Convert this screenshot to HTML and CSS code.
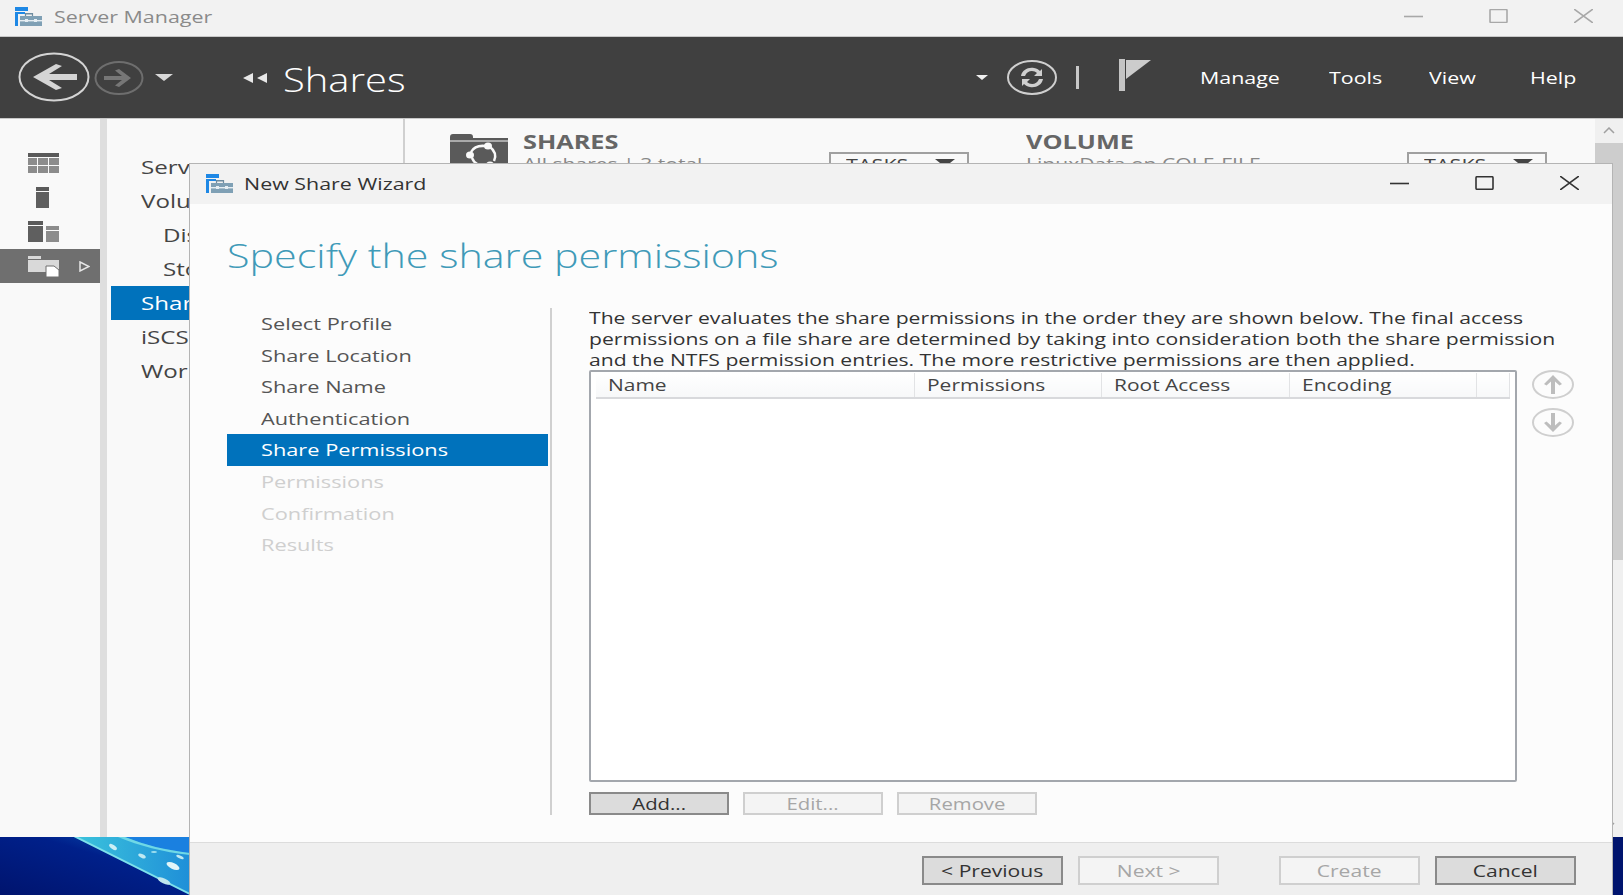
FILE: index.html
```html
<!DOCTYPE html>
<html lang="en">

<head>
    <meta charset="UTF-8">
    <title>Server Manager - New Share Wizard</title>
    <link rel="stylesheet" href="styles.css">
</head>

<body>
    <svg class="defs" aria-hidden="true">
        <symbol id="app-icon" viewBox="0 0 27 19">
            <rect x="0" y="0" width="13" height="4" fill="#1e88e5" />
            <rect x="0" y="5" width="3" height="14" fill="#1e88e5" />
            <rect x="3" y="5" width="7" height="2" fill="#1e88e5" />
            <path d="M11 7h6M10.5 9V6.500h7V9" fill="none" stroke="#6e8ca0" stroke-width="1.200" />
            <rect x="5" y="9" width="22" height="10" fill="#7fa0b5" />
            <rect x="5" y="13" width="22" height="1.400" fill="#e6eef3" />
            <rect x="10" y="12" width="3" height="3" fill="#e6eef3" />
            <rect x="19" y="12" width="3" height="3" fill="#e6eef3" />
        </symbol>
        <linearGradient id="wall-sea" x1="0" y1="1" x2="1" y2="0">
            <stop offset="0" stop-color="#00146e" />
            <stop offset="0.600" stop-color="#00208a" />
            <stop offset="1" stop-color="#0b5fc0" />
        </linearGradient>
        <linearGradient id="wall-band" x1="0" y1="0" x2="1" y2="0">
            <stop offset="0" stop-color="#3cc4dc" />
            <stop offset="1" stop-color="#1f8fd8" />
        </linearGradient>
    </svg>

    <!-- server manager window, behind the wizard -->
    <div class="window">
        <header class="titlebar">
            <svg class="app-icon"><use href="#app-icon" /></svg>
            <span class="titlebar-text"><span class="st">Server Manager</span></span>
            <div class="win-controls win-controls-dim">
                <svg width="19" height="14" viewBox="0 0 19 14"><path d="M0 7.500h19" /></svg>
                <svg width="19" height="14" viewBox="0 0 19 14"><rect x="1" y="0.500" width="17" height="13" rx="1" /></svg>
                <svg width="19" height="14" viewBox="0 0 19 14"><path d="M0 0l19 14M19 0L0 14" /></svg>
            </div>
        </header>

        <div class="topbar">
            <svg class="nav-back" width="72" height="50" viewBox="0 0 72 50">
                <ellipse cx="36" cy="25" rx="34.500" ry="23.500" fill="none" stroke="#d4d4d4" stroke-width="2" />
                <path d="M15 25L38 12l6 2-13 8h28v6H31l13 8-6 2z" fill="#d4d4d4" />
            </svg>
            <svg class="nav-forward" width="50" height="34" viewBox="0 0 50 34">
                <ellipse cx="25" cy="17" rx="23.500" ry="16" fill="none" stroke="#6e6e6e" stroke-width="2" />
                <path d="M37 17L25 8l-4 1.500 7 5.500H10v4h18l-7 5.500 4 1.500z" fill="#777" />
            </svg>
            <span class="caret caret-big"></span>
            <svg class="crumb-arrows" width="25" height="10" viewBox="0 0 25 10">
                <path d="M0 5l10-5v10zM14 5l10-5v10z" fill="#e8e8e8" />
            </svg>
            <span class="crumb-title"><span class="st">Shares</span></span>

            <span class="caret caret-small"></span>
            <svg class="refresh" width="50" height="35" viewBox="0 0 50 35">
                <ellipse cx="25" cy="17.500" rx="24" ry="16.500" fill="none" stroke="#cfcfcf" stroke-width="2" />
                <path d="M14 16c1-6 7-9 13-8 3 .5 5 2 6 3l2-2v7h-8l3-3c-3-3-10-3-12 3z" fill="#cfcfcf" />
                <path d="M36 19c-1 6-7 9-13 8-3-.5-5-2-6-3l-2 2v-7h8l-3 3c3 3 10 3 12-3z" fill="#cfcfcf" />
            </svg>
            <span class="topbar-sep"></span>
            <svg class="flag" width="32" height="32" viewBox="0 0 32 32">
                <path d="M0 0h6v32H0z" fill="#c4c4c4" />
                <path d="M7 1h25L7 20z" fill="#cccccc" />
            </svg>
            <nav class="menu">
                <span class="menu-manage"><span class="st">Manage</span></span>
                <span class="menu-tools"><span class="st">Tools</span></span>
                <span class="menu-view"><span class="st">View</span></span>
                <span class="menu-help"><span class="st">Help</span></span>
            </nav>
        </div>

        <div class="main">
            <aside class="rail">
                <div class="rail-item">
                    <svg width="31" height="20" viewBox="0 0 31 20">
                        <rect width="31" height="4" fill="#5a5a5a" />
                        <path d="M0 5h9v7H0zM10 5h10v7H10zM21 5h10v7H21zM0 13h9v7H0zM10 13h10v7H10zM21 13h10v7H21z" fill="#8c8c8c" />
                    </svg>
                </div>
                <div class="rail-item">
                    <svg width="13" height="21" viewBox="0 0 13 21">
                        <rect width="13" height="4" fill="#5a5a5a" />
                        <rect y="5" width="13" height="16" fill="#5f5f5f" />
                    </svg>
                </div>
                <div class="rail-item">
                    <svg width="31" height="21" viewBox="0 0 31 21">
                        <rect width="15" height="4" fill="#5a5a5a" />
                        <rect y="5" width="15" height="16" fill="#5f5f5f" />
                        <rect x="18" y="5" width="13" height="4" fill="#8c8c8c" />
                        <rect x="18" y="10" width="13" height="11" fill="#8c8c8c" />
                    </svg>
                </div>
                <div class="rail-item rail-item-active">
                    <svg width="31" height="21" viewBox="0 0 31 21">
                        <path d="M0 0h13v3H0zM0 4h31v12H0z" fill="#d9d9d9" />
                        <path d="M18 10h8l5 4v7H18z" fill="#fff" stroke="#6f6f6f" stroke-width="1" />
                    </svg>
                    <svg class="rail-arrow" width="11" height="11" viewBox="0 0 11 11">
                        <path d="M1 1l9 4.500-9 4.500z" fill="none" stroke="#e6e6e6" stroke-width="1.500" />
                    </svg>
                </div>
            </aside>
            <div class="rail-divider"></div>
            <nav class="tree">
                <div class="tree-item"><span class="st">Servers</span></div>
                <div class="tree-item"><span class="st">Volumes</span></div>
                <div class="tree-item tree-sub"><span class="st">Disks</span></div>
                <div class="tree-item tree-sub"><span class="st">Storage Pools</span></div>
                <div class="tree-item tree-active"><span class="st">Shares</span></div>
                <div class="tree-item"><span class="st">iSCSI</span></div>
                <div class="tree-item"><span class="st">Work Folders</span></div>
            </nav>
            <section class="content">
                <div class="panel panel-shares">
                    <svg class="panel-icon" width="58" height="40" viewBox="0 0 58 40">
                        <path d="M0 3q0-3 3-3h17q3 0 3 3v1h35v36H0z" fill="#5a5a5a" />
                        <path d="M0 7h58" stroke="#f9f9f9" stroke-width="1" />
                        <path d="M35 12q-10-1-14 6M22 24q3 8 14 8M44 27q4-8-5-15" fill="none" stroke="#f9f9f9" stroke-width="2.500" />
                        <ellipse cx="38" cy="12" rx="4" ry="3.500" fill="#f9f9f9" />
                        <ellipse cx="20" cy="21" rx="4" ry="3.500" fill="#f9f9f9" />
                        <ellipse cx="40" cy="31" rx="4" ry="3.500" fill="#f9f9f9" />
                    </svg>
                    <div class="panel-text">
                        <div class="panel-title"><span class="st">SHARES</span></div>
                        <div class="panel-sub"><span class="st">All shares | 3 total</span></div>
                    </div>
                    <div class="tasks"><span class="st">TASKS</span><span class="caret caret-dark"></span></div>
                </div>
                <div class="panel panel-volume">
                    <div class="panel-text">
                        <div class="panel-title"><span class="st">VOLUME</span></div>
                        <div class="panel-sub"><span class="st">LinuxData on COLE-FILE</span></div>
                    </div>
                    <div class="tasks"><span class="st">TASKS</span><span class="caret caret-dark"></span></div>
                </div>
            </section>
            <div class="scrollbar">
                <svg class="scroll-arrow" width="12" height="7" viewBox="0 0 12 7"><path d="M1 6l5-5 5 5" /></svg>
                <div class="scroll-thumb"></div>
                <svg class="scroll-arrow scroll-down" width="12" height="7" viewBox="0 0 12 7"><path d="M1 1l5 5 5-5" /></svg>
            </div>
        </div>
    </div>

    <!-- wallpaper corner under the window -->
    <svg class="wallpaper" width="190" height="58" viewBox="0 0 190 58">
        <rect width="190" height="58" fill="url(#wall-sea)" />
        <path d="M74 0H190V58z" fill="url(#wall-band)" />
        <path d="M125 0C145 8 165 13 190 16V0z" fill="#1a80e0" />
        <path d="M125 0C145 8 165 13 190 16v2C162 15 140 9 118 0z" fill="#6fd8e6" />
        <path d="M74 0h4L190 56v2z" fill="#7fe0ea" />
        <ellipse cx="113" cy="10" rx="4.500" ry="2" fill="#cdeff5" transform="rotate(35 113 10)" />
        <ellipse cx="142" cy="19" rx="4" ry="1.800" fill="#bfe9f2" transform="rotate(25 142 19)" />
        <ellipse cx="154" cy="15" rx="3" ry="1" fill="#9fdff0" />
        <ellipse cx="173" cy="29" rx="7" ry="3" fill="#e2f5f8" transform="rotate(25 173 29)" />
        <ellipse cx="180" cy="20" rx="4" ry="1.500" fill="#bfe9f2" transform="rotate(25 180 20)" />
        <ellipse cx="164" cy="44" rx="7" ry="2.500" fill="#bfe6ee" transform="rotate(25 164 44)" />
    </svg>

    <!-- wizard -->
    <div class="dialog">
        <header class="dlg-head">
            <svg class="dlg-icon"><use href="#app-icon" /></svg>
            <span class="dlg-title"><span class="st">New Share Wizard</span></span>
            <div class="win-controls">
                <svg width="19" height="14" viewBox="0 0 19 14"><path d="M0 7.500h19" /></svg>
                <svg width="19" height="14" viewBox="0 0 19 14"><rect x="1" y="0.750" width="17" height="12.500" rx="1" /></svg>
                <svg width="19" height="14" viewBox="0 0 19 14"><path d="M0 0l19 14M19 0L0 14" /></svg>
            </div>
        </header>

        <div class="dlg-body">
            <h1 class="page-title"><span class="st">Specify the share permissions</span></h1>
            <div class="wizard">
                <ul class="steps">
                    <li><span class="st">Select Profile</span></li>
                    <li><span class="st">Share Location</span></li>
                    <li><span class="st">Share Name</span></li>
                    <li><span class="st">Authentication</span></li>
                    <li class="step-active"><span class="st">Share Permissions</span></li>
                    <li class="step-off"><span class="st">Permissions</span></li>
                    <li class="step-off"><span class="st">Confirmation</span></li>
                    <li class="step-off"><span class="st">Results</span></li>
                </ul>
                <div class="wizard-main">
                    <p class="intro"><span class="st">The server evaluates the share permissions in the order they are shown below. The final access<br>permissions on a file share are determined by taking into consideration both the share permission<br>and the NTFS permission entries. The more restrictive permissions are then applied.</span></p>
                    <div class="list-row">
                        <div class="list-box">
                            <table class="perm-table">
                                <thead>
                                    <tr>
                                        <th class="col-name"><span class="st">Name</span></th>
                                        <th class="col-perm"><span class="st">Permissions</span></th>
                                        <th class="col-root"><span class="st">Root Access</span></th>
                                        <th class="col-enc"><span class="st">Encoding</span></th>
                                        <th class="col-end"></th>
                                    </tr>
                                </thead>
                            </table>
                        </div>
                        <div class="order-btns">
                            <svg width="42" height="29" viewBox="0 0 42 29">
                                <ellipse cx="21" cy="14.500" rx="20" ry="13.500" fill="none" stroke="#cfcfcf" stroke-width="2" />
                                <path d="M21 5l-9 9 2.500 1.500 4.500-4V24h4V11.500l4.500 4L30 14z" fill="#bdbdbd" />
                            </svg>
                            <svg width="42" height="29" viewBox="0 0 42 29">
                                <ellipse cx="21" cy="14.500" rx="20" ry="13.500" fill="none" stroke="#cfcfcf" stroke-width="2" />
                                <path d="M21 24l-9-9 2.500-1.500 4.500 4V5h4v12.500l4.500-4L30 15z" fill="#bdbdbd" />
                            </svg>
                        </div>
                    </div>
                    <div class="list-actions">
                        <button class="btn btn-on"><span class="st">Add...</span></button>
                        <button class="btn btn-off"><span class="st">Edit...</span></button>
                        <button class="btn btn-off"><span class="st">Remove</span></button>
                    </div>
                </div>
            </div>
        </div>

        <footer class="dlg-foot">
            <button class="btn btn-on btn-foot"><span class="st">&lt; Previous</span></button>
            <button class="btn btn-off btn-foot"><span class="st">Next &gt;</span></button>
            <button class="btn btn-off btn-foot btn-create"><span class="st">Create</span></button>
            <button class="btn btn-on btn-foot"><span class="st">Cancel</span></button>
        </footer>
    </div>
</body>

</html>
```

FILE: styles.css
```css
* {
    box-sizing: border-box;
}

html,
body {
    margin: 0;
    height: 895px;
    overflow: hidden;
}

body {
    position: relative;
    background: #00146e;
    font-family: "Open Sans", "Noto Sans", sans-serif;
    color: #444;
}

.defs {
    width: 0;
    height: 0;
    position: absolute;
}

/* the capture is wider than it is tall, so its letters are stretched */
.st {
    display: inline-block;
    white-space: nowrap;
    transform-origin: left center;
    transform: scaleX(var(--sx, 1.28));
}

.window {
    height: 837px;
    display: flex;
    flex-direction: column;
    background: #f9f9f9;
}

/* title bar */
.titlebar {
    height: 37px;
    flex: none;
    display: flex;
    align-items: center;
    background: #f2f2f2;
    border-bottom: 1px solid #c8c8c8;
    padding: 0 0 4px 15px;
}

.app-icon {
    width: 27px;
    height: 19px;
}

.titlebar-text {
    margin-left: 12px;
    font-size: 17px;
    color: #8a8a8a;
    --sx: 1.26;
}

.win-controls {
    margin-left: auto;
    display: flex;
    gap: 66px;
    padding-right: 30px;
}

.win-controls svg * {
    fill: none;
    stroke: #333;
    stroke-width: 1.600;
}

.win-controls-dim svg * {
    stroke: #a8a8a8;
}

/* dark bar */
.topbar {
    height: 82px;
    flex: none;
    display: flex;
    align-items: center;
    background: #404040;
    border-bottom: 1px solid #c8c8c8;
    padding-left: 18px;
}

.nav-back {
    margin-top: -2px;
}

.nav-forward {
    margin-left: 4px;
}

.caret {
    display: inline-block;
    width: 0;
    height: 0;
    border-style: solid;
    border-color: #d8d8d8 transparent transparent;
}

.caret-big {
    margin-left: 11px;
    border-width: 7px 9.500px 0;
}

.crumb-arrows {
    margin-left: 70px;
}

.crumb-title {
    margin-left: 15px;
    font-size: 33px;
    font-weight: 300;
    color: #fff;
    line-height: 1;
    margin-top: 3px;
    --sx: 1.21;
}

.caret-small {
    margin-left: auto;
    border-width: 5px 6px 0;
    border-color: #f0f0f0 transparent transparent;
}

.refresh {
    margin-left: 19px;
}

.topbar-sep {
    width: 3px;
    height: 23px;
    margin-left: 19px;
    background: #c8c8c8;
}

.flag {
    margin-left: 40px;
    margin-top: -6px;
}

.menu {
    margin-left: 49px;
    padding-right: 47px;
    display: flex;
    font-size: 17px;
    color: #fff;
    --sx: 1.26;
}

.menu-manage {
    width: 129px;
}

.menu-tools {
    width: 100px;
}

.menu-view {
    width: 101px;
}

.menu-help {
    width: 46px;
}

/* shell under the bar */
.main {
    flex: 1;
    display: flex;
    min-height: 0;
}

.rail {
    width: 100px;
    padding-top: 27px;
}

.rail-item {
    height: 34px;
    padding-left: 28px;
    display: flex;
    align-items: center;
    justify-content: flex-start;
}

.rail-item:nth-child(2) {
    padding-left: 36px;
}

.rail-item-active {
    margin-top: 1px;
    background: #6f6f6f;
}

.rail-arrow {
    margin-left: 20px;
}

.rail-divider {
    width: 7px;
    background: #dedede;
}

.tree {
    width: 298px;
    padding-top: 31px;
    border-right: 2px solid #d0d0d0;
    font-size: 19px;
    --sx: 1.27;
}

.tree-item {
    width: 86px;
    height: 34px;
    margin-left: 4px;
    padding-left: 30px;
    line-height: 34px;
    color: #444;
}

.tree-sub {
    padding-left: 52px;
}

.tree-active {
    background: #0072bc;
    color: #fff;
}

.content {
    flex: 1;
    display: flex;
    padding: 13px 0 0 45px;
}

.panel {
    display: flex;
    align-items: flex-start;
}

.panel-shares {
    width: 576px;
    padding-right: 57px;
}

.panel-volume {
    flex: 1;
    padding-right: 48px;
}

.panel-icon {
    margin-right: 15px;
    margin-top: 2px;
}

.panel-text {
    flex: 1;
}

.panel-title {
    font-size: 19px;
    font-weight: 700;
    color: #666;
    line-height: 20px;
    --sx: 1.33;
}

.panel-sub {
    font-size: 17px;
    color: #888;
    line-height: 24px;
    --sx: 1.24;
}

.tasks {
    width: 140px;
    height: 34px;
    margin-top: 20px;
    padding-left: 15px;
    border: 2px solid #a0a0a0;
    font-size: 17px;
    line-height: 22px;
    color: #444;
    display: flex;
    align-items: flex-start;
    --sx: 1.27;
}

.caret-dark {
    margin: 5px 0 0 40px;
    border-width: 8px 10px 0;
    border-color: #444 transparent transparent;
}

.scrollbar {
    width: 28px;
    display: flex;
    flex-direction: column;
    background: #f0f0f0;
    padding: 8px 0;
}

.scroll-arrow {
    flex: none;
    display: block;
    margin: 0 auto;
}

.scroll-arrow path {
    fill: none;
    stroke: #a0a0a0;
    stroke-width: 1.500;
}

.scroll-thumb {
    height: 417px;
    margin-top: 9px;
    background: #cdcdcd;
}

.scroll-down {
    margin-top: auto;
}

.wallpaper {
    position: absolute;
    left: 0;
    top: 837px;
}

/* wizard window */
.dialog {
    position: absolute;
    left: 189px;
    top: 163px;
    width: 1424px;
    height: 732px;
    display: flex;
    flex-direction: column;
    background: #fcfcfc;
    border: 1px solid #b4b4b4;
    border-bottom: none;
}

.dlg-head {
    height: 40px;
    flex: none;
    display: flex;
    align-items: center;
    padding: 0 0 2px 16px;
    background: #f2f2f2;
}

.dlg-icon {
    width: 27px;
    height: 19px;
}

.dlg-title {
    margin-left: 11px;
    font-size: 17px;
    color: #333;
    --sx: 1.26;
}

.dlg-head .win-controls {
    padding-right: 33px;
}

.dlg-body {
    flex: 1;
    padding-left: 37px;
    min-height: 0;
}

.page-title {
    margin: 30px 0 0;
    height: 44px;
    font-size: 33px;
    line-height: 44px;
    font-weight: 300;
    color: #3f9ab8;
    --sx: 1.25;
}

.wizard {
    display: flex;
    margin-top: 30px;
    height: 507px;
}

.steps {
    list-style: none;
    margin: 0;
    padding: 0;
    width: 321px;
    font-size: 17px;
    color: #555;
}

.steps li {
    height: 31.600px;
    line-height: 31.600px;
    padding-left: 34px;
}

.steps .step-active {
    background: #0072bc;
    color: #fff;
}

.steps .step-off {
    color: #cfcfcf;
}

.wizard-main {
    margin-left: 2px;
    padding-left: 37px;
    border-left: 2px solid #d0d0d0;
    flex: 1;
}

.intro {
    margin: 0;
    height: 62px;
    font-size: 16px;
    line-height: 21px;
    color: #333;
    --sx: 1.32;
}

.list-row {
    display: flex;
}

.list-box {
    width: 928px;
    height: 412px;
    padding: 1px 5px 0 5px;
    background: #fff;
    border: 2px solid #a3a7ad;
    border-radius: 2px;
}

.perm-table {
    width: 100%;
    table-layout: fixed;
    border-collapse: collapse;
}

.perm-table th {
    height: 25px;
    padding: 0 0 0 12px;
    text-align: left;
    font-size: 16px;
    font-weight: 400;
    color: #444;
    background: linear-gradient(#fff, #f7f8f9);
    border-right: 1px solid #e2e3e5;
    border-bottom: 2px solid #d8d9dc;
    --sx: 1.31;
}

.col-name {
    width: 318px;
}

.col-perm {
    width: 187px;
}

.col-root {
    width: 188px;
}

.col-enc {
    width: 187px;
}

.order-btns {
    margin-left: 15px;
    display: flex;
    flex-direction: column;
    gap: 9px;
}

.list-actions {
    margin-top: 10px;
    display: flex;
    gap: 14px;
}

.btn {
    width: 140px;
    height: 23px;
    padding: 0;
    font-family: inherit;
    font-size: 16px;
    line-height: 1;
    --sx: 1.27;
}

.btn .st {
    transform-origin: center;
}

.btn-on {
    background: #dcdcdc;
    border: 2px solid #8a8a8a;
    color: #333;
}

.btn-off {
    background: #f4f4f4;
    border: 2px solid #cfcfcf;
    color: #a6a6a6;
}

.dlg-foot {
    height: 53px;
    flex: none;
    display: flex;
    padding: 13px 0 0 732px;
    gap: 15px;
    background: #efefef;
    border-top: 1px solid #dcdcdc;
}

.btn-foot {
    width: 141px;
    height: 29px;
    font-size: 17px;
    --sx: 1.24;
}

.btn-create {
    margin-left: 45px;
}
```
